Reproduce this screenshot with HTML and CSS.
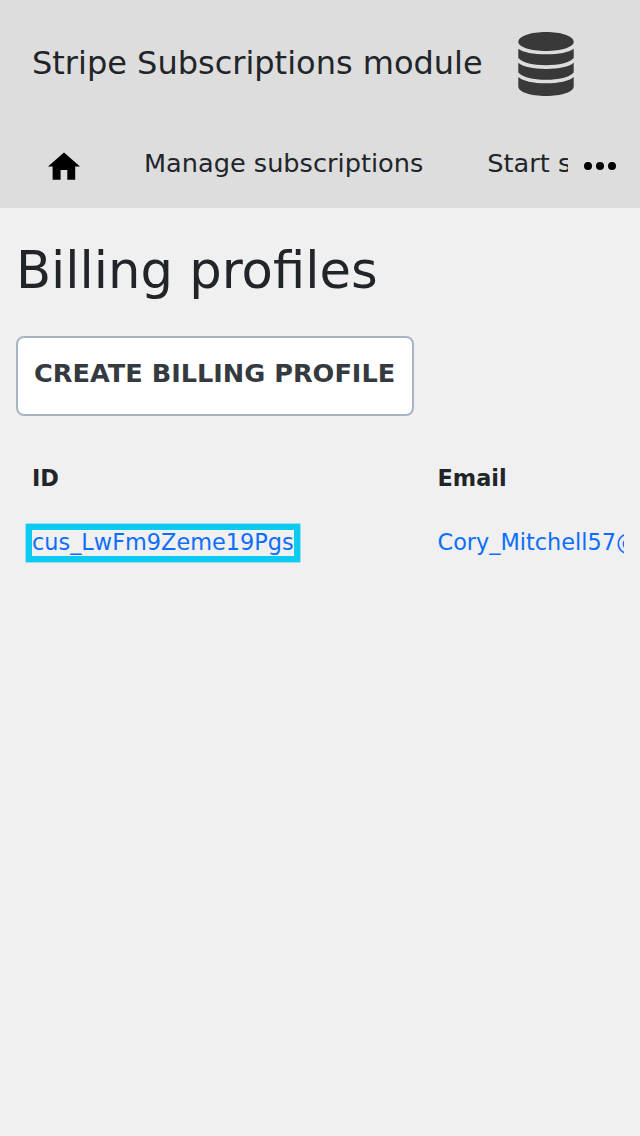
FILE: index.html
```html
<!DOCTYPE html>
<html lang="en">
<head>
<meta charset="utf-8">
<title>Billing profiles</title>
<link rel="stylesheet" href="styles.css">
</head>
<body>
<header class="header">
  <div class="brand">
    <span class="brand-name">Stripe Subscriptions module</span>
    <svg class="brand-icon" viewBox="0 0 56 64" width="56" height="64" fill="#393939">
      <path d="M.3 10C.3 4 13 0 28 0S55.700 4 55.700 10C55.700 15 43 19 28 19S.3 15 .3 10Z"/>
      <path d="M.3 16.800C5 20.500 15 22.300 28 22.300S51 20.500 55.700 16.800V26C51 31 41 33.200 28 33.200S5 31 .3 26Z"/>
      <path d="M.3 30.800C5 34.800 15 37 28 37S51 34.800 55.700 30.800V40.500C51 45.500 41 47.800 28 47.800S5 45.500 .3 40.500Z"/>
      <path d="M.3 45C5 49 15 51.300 28 51.300S51 49 55.700 45V54.500C55.700 60 43 64 28 64S.3 60 .3 54.500Z"/>
    </svg>
  </div>
  <nav class="nav">
    <div class="nav-items">
      <a class="nav-home"><svg viewBox="0 0 32 28" width="32" height="28"><path d="M16 .5 32 14.500H27.200V27.700H19.300V18H12.600V27.700H4.600V14.500H0Z"/></svg></a>
      <a class="nav-link">Manage subscriptions</a>
      <a class="nav-link">Start subscription</a>
    </div>
    <svg class="nav-more" viewBox="0 0 32 8" width="32" height="8"><circle cx="4" cy="4" r="4"/><circle cx="16" cy="4" r="4"/><circle cx="28" cy="4" r="4"/></svg>
  </nav>
</header>
<main class="main">
  <h1 class="title">Billing profiles</h1>
  <button class="create">CREATE BILLING PROFILE</button>
  <div class="table">
    <div class="row head"><span>ID</span><span>Email</span></div>
    <div class="row"><span><a class="link focused">cus_LwFm9Zeme19Pgs</a></span><span><a class="link">Cory_Mitchell57@example.com</a></span></div>
  </div>
</main>
</body>
</html>
```

FILE: styles.css
```css
* { box-sizing: border-box; }
body { margin: 0; min-height: 1136px; background: #f0f0f0; color: #212529; font-family: "DejaVu Sans", sans-serif; }
.header { height: 208px; background: #ddd; }
.brand { height: 128px; padding-left: 32px; display: flex; align-items: center; gap: 35px; }
.brand-name { font-size: 32px; line-height: 48px; padding-bottom: 2px; white-space: nowrap; }
.brand-icon { flex: none; }
.nav { height: 80px; display: flex; }
.nav-items { width: 568px; overflow: hidden; display: flex; white-space: nowrap; padding-left: 48px; gap: 64px; }
.nav-home { padding-top: 24px; }
.nav-link { font-size: 25.6px; line-height: 38px; padding-top: 16px; }
.nav-more { margin: 34px 0 0 16px; }
.main { padding: 32px 16px 0; }
.title { margin: 0 0 35px; font-size: 51.2px; font-weight: 400; line-height: 61px; }
.create { display: block; height: 80px; width: 398px; padding: 0 0 6px 16px; border: 2px solid #a9b4c2; border-radius: 8px; background: #fff; color: #343a40; font: 700 25.6px "DejaVu Sans", sans-serif; text-align: left; white-space: nowrap; }
.table { margin-top: 30px; overflow: hidden; font-size: 22.4px; line-height: 34px; }
.row { display: grid; grid-template-columns: 405.5px max-content; padding: 15px 16px; }
.head { font-weight: 700; }
.link { color: #0d6efd; }
.focused { display: inline-block; padding-bottom: 2px; line-height: 24px; outline: 6px solid #0dcaf0; box-shadow: 0 0 0 6.4px #0dcaf0; }
```
